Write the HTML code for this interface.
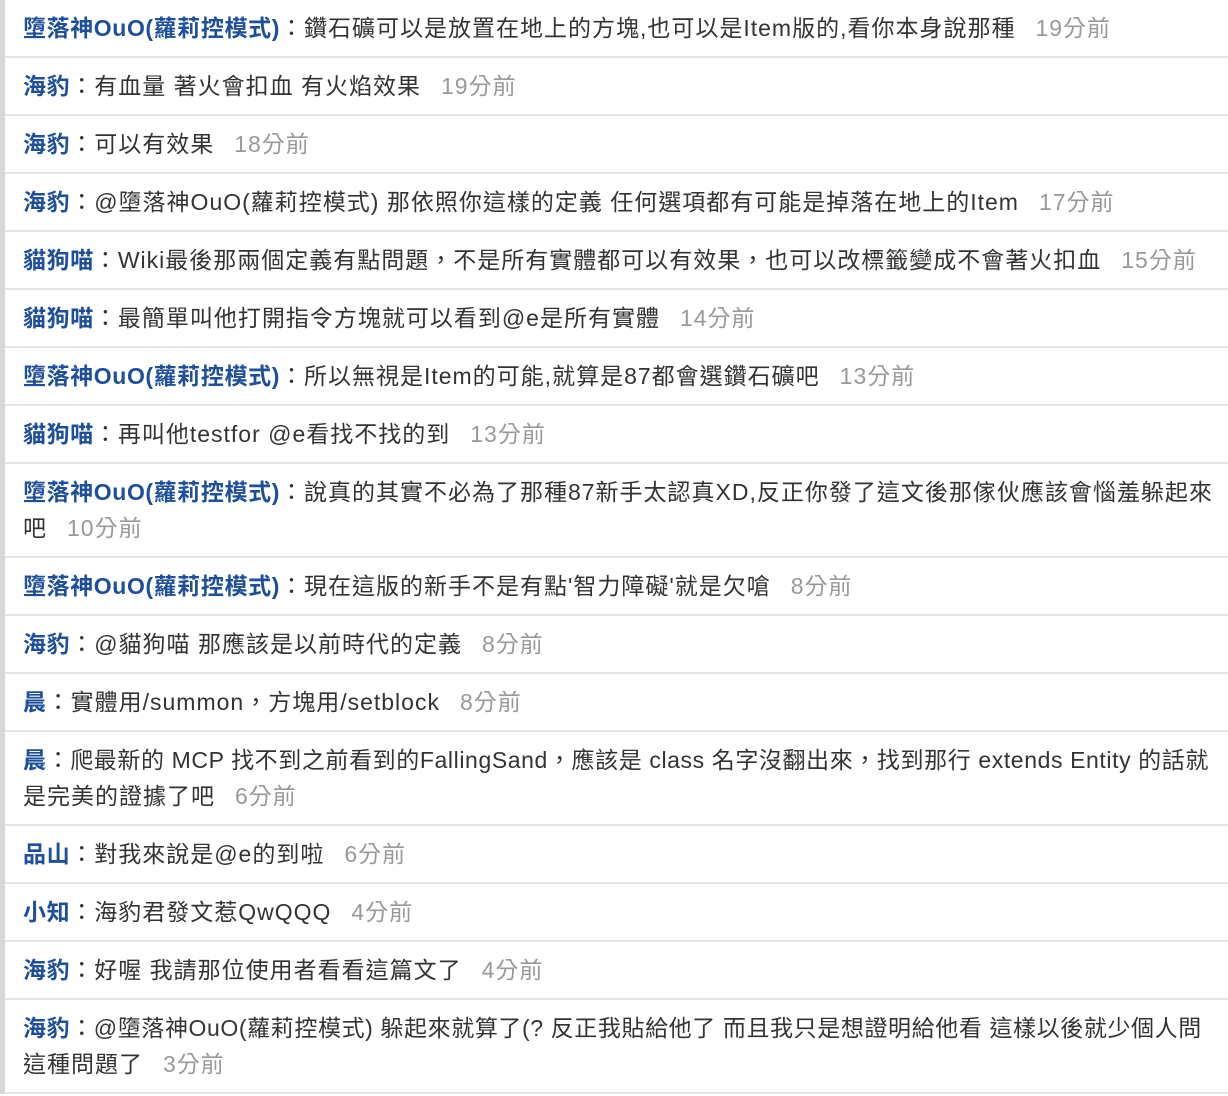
<!DOCTYPE html>
<html><head><meta charset="utf-8"><style>
html,body{margin:0;padding:0;background:#fff;}
body{width:1228px;height:1096px;overflow:hidden;font-family:"Liberation Sans","Noto Sans CJK TC",sans-serif;font-size:23px;color:#333;letter-spacing:1px;}
.wrap{border-left:5px solid #d8d8d8;}
.r{padding:10px 6px 10px 18px;line-height:36px;border-bottom:2px solid #e6e6e6;}
.n{color:#1d4f9a;font-weight:bold;letter-spacing:0.6px;}
.t{color:#999;margin-left:20px;}
.nw{white-space:nowrap;letter-spacing:0.6px;}
</style></head><body><div class="wrap">
<div class="r"><span class="n">墮落神OuO(蘿莉控模式)</span>：鑽石礦可以是放置在地上的方塊,也可以是Item版的,看你本身說那種<span class="t">19分前</span></div>
<div class="r"><span class="n">海豹</span>：有血量 著火會扣血 有火焰效果<span class="t">19分前</span></div>
<div class="r"><span class="n">海豹</span>：可以有效果<span class="t">18分前</span></div>
<div class="r"><span class="n">海豹</span>：@墮落神OuO(蘿莉控模式) 那依照你這樣的定義 任何選項都有可能是掉落在地上的Item<span class="t">17分前</span></div>
<div class="r"><span class="n">貓狗喵</span>：Wiki最後那兩個定義有點問題，不是所有實體都可以有效果，也可以改標籤變成不會著火扣血<span class="t">15分前</span></div>
<div class="r"><span class="n">貓狗喵</span>：最簡單叫他打開指令方塊就可以看到@e是所有實體<span class="t">14分前</span></div>
<div class="r"><span class="n">墮落神OuO(蘿莉控模式)</span>：所以無視是Item的可能,就算是87都會選鑽石礦吧<span class="t">13分前</span></div>
<div class="r"><span class="n">貓狗喵</span>：再叫他testfor @e看找不找的到<span class="t">13分前</span></div>
<div class="r"><span class="n">墮落神OuO(蘿莉控模式)</span>：說真的其實不必為了那種87新手太認真XD,反正你發了這文後那傢伙應該會惱羞躲起來吧<span class="t">10分前</span></div>
<div class="r"><span class="n">墮落神OuO(蘿莉控模式)</span>：現在這版的新手不是有點'智力障礙'就是欠嗆<span class="t">8分前</span></div>
<div class="r"><span class="n">海豹</span>：@貓狗喵 那應該是以前時代的定義<span class="t">8分前</span></div>
<div class="r"><span class="n">晨</span>：實體用/summon，方塊用/setblock<span class="t">8分前</span></div>
<div class="r"><span class="nw"><span class="n">晨</span>：爬最新的 MCP 找不到之前看到的FallingSand，應該是 class 名字沒翻出來，找到那行 extends Entity 的話就</span><br>是完美的證據了吧<span class="t">6分前</span></div>
<div class="r"><span class="n">品山</span>：對我來說是@e的到啦<span class="t">6分前</span></div>
<div class="r"><span class="n">小知</span>：海豹君發文惹QwQQQ<span class="t">4分前</span></div>
<div class="r"><span class="n">海豹</span>：好喔 我請那位使用者看看這篇文了<span class="t">4分前</span></div>
<div class="r"><span class="nw"><span class="n">海豹</span>：@墮落神OuO(蘿莉控模式) 躲起來就算了(? 反正我貼給他了 而且我只是想證明給他看 這樣以後就少個人問</span><br>這種問題了<span class="t">3分前</span></div>
</div></body></html>
